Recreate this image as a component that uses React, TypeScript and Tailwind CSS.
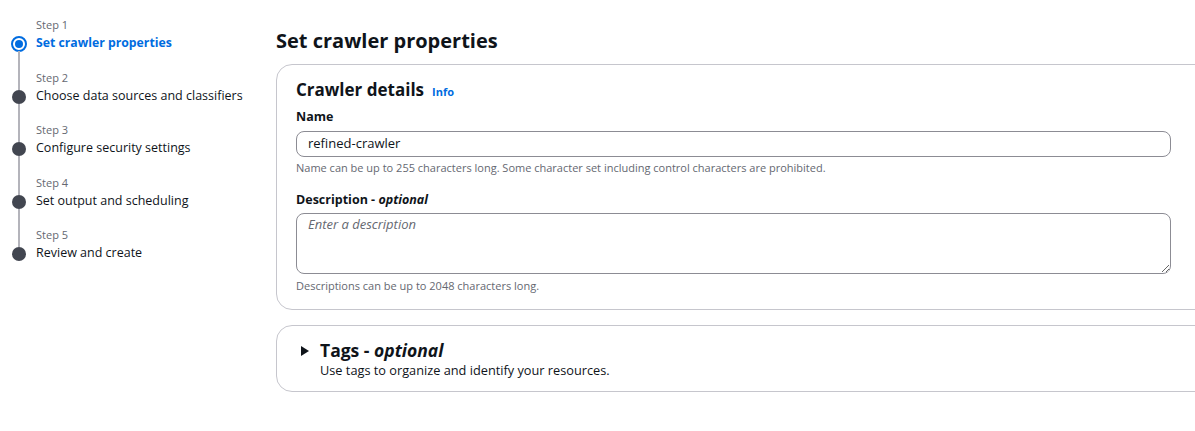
import React from "react";

const steps = [
  { n: 1, title: "Set crawler properties", active: true },
  { n: 2, title: "Choose data sources and classifiers" },
  { n: 3, title: "Configure security settings" },
  { n: 4, title: "Set output and scheduling" },
  { n: 5, title: "Review and create" },
];

export default function App() {
  return (
    <div
      className="w-[1195px] h-[431px] overflow-hidden bg-white text-[#000716] flex"
      style={{ fontFamily: '"Open Sans", "Noto Sans", sans-serif' }}
    >
      {/* Sidebar */}
      <nav className="w-[276px] shrink-0 pt-[17px] flex flex-col">
        {steps.map((s, i) => (
          <div key={s.n} className="flex h-[52.5px]">
            <div className="w-[38px] shrink-0 flex flex-col items-center">
              <div className={`h-[20px] w-[2px] ${i === 0 ? "" : "bg-[#b4b4bb]"}`} />
              {s.active ? (
                <div className="w-[16px] h-[16px] rounded-full border-2 border-[#006ce0] flex items-center justify-center -my-[1px]">
                  <div className="w-[8px] h-[8px] rounded-full bg-[#006ce0]" />
                </div>
              ) : (
                <div className="w-[14px] h-[14px] rounded-full bg-[#424650]" />
              )}
              <div className={`flex-1 w-[2px] ${i === steps.length - 1 ? "" : "bg-[#b4b4bb]"}`} />
            </div>
            <div className="-ml-[2px] flex flex-col">
              <div className="text-[11px] leading-[15px] mb-[1px] text-[#656871]">Step {s.n}</div>
              <div
                className={`leading-[20px] ${
                  s.active ? "text-[12.25px] font-bold text-[#006ce0]" : "text-[12.5px] text-[#0f141a]"
                }`}
              >
                {s.title}
              </div>
            </div>
          </div>
        ))}
      </nav>

      {/* Main */}
      <main className="w-[960px] shrink-0 pt-[28px]">
        <h1 className="text-[20px] leading-[26px] font-bold text-[#0f141a] mb-[10px]">
          Set crawler properties
        </h1>

        <section className="border border-[#c6c6cd] rounded-[16px] px-[19px] pt-[14px] pb-[15px]">
          <div className="flex items-baseline gap-[8px] h-[22px]">
            <h2 className="text-[17px] leading-[22px] font-bold text-[#0f141a]">Crawler details</h2>
            <span className="text-[11px] font-bold text-[#006ce0]">Info</span>
          </div>

          <div className="mt-[7px] text-[12.5px] leading-[18px] font-bold text-[#0f141a]">Name</div>
          <div className="mt-[5px] w-[875px] h-[26px] border border-[#8c8c94] rounded-[8px] px-[11px] flex items-center text-[13px] text-[#0f141a]">
            refined-crawler
          </div>
          <div className="mt-[3px] text-[11px] leading-[16px] text-[#656871]">
            Name can be up to 255 characters long. Some character set including control characters are prohibited.
          </div>

          <div className="mt-[15px] text-[12.5px] leading-[18px] font-bold text-[#0f141a]">
            Description - <i>optional</i>
          </div>
          <textarea
            className="mt-[4px] block w-[875px] h-[61px] border border-[#8c8c94] rounded-[8px] px-[11px] py-0 text-[13px] leading-[20px] italic placeholder:text-[#656871] outline-none"
            placeholder="Enter a description"
            style={{ fontFamily: '"Open Sans", "Noto Sans", sans-serif' }}
          />
          <div className="mt-[4px] text-[11px] leading-[16px] text-[#656871]">
            Descriptions can be up to 2048 characters long.
          </div>
        </section>

        <section className="mt-[15px] h-[67px] border border-[#c6c6cd] rounded-[16px] pl-[22px] flex pt-[13px]">
          <svg width="12" height="12" viewBox="0 0 12 12" className="mt-[6px] mr-[9px]">
            <path d="M2 1 L10 6 L2 11 Z" fill="#0f141a" />
          </svg>
          <div>
            <div className="text-[17.5px] leading-[22px] font-bold text-[#0f141a]">
              Tags - <i>optional</i>
            </div>
            <div className="text-[12.75px] leading-[18px] text-[#0f141a]">
              Use tags to organize and identify your resources.
            </div>
          </div>
        </section>
      </main>
    </div>
  );
}
